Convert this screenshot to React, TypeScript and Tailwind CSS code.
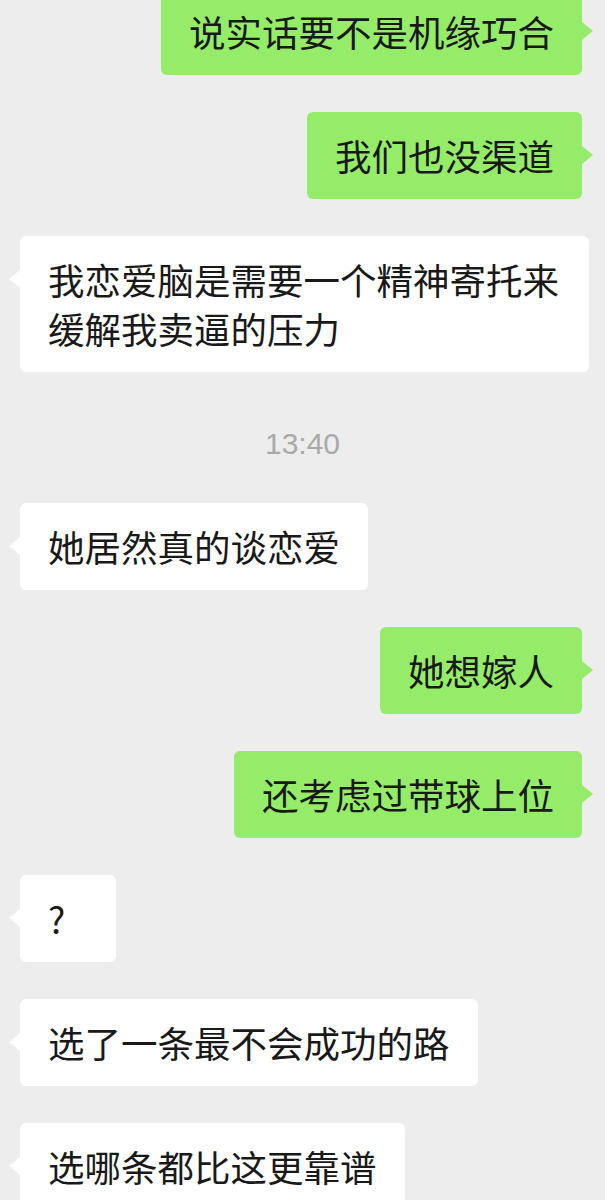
type Msg =
  | { kind: 'me'; text: string }
  | { kind: 'them'; text: React.ReactNode; className?: string }
  | { kind: 'time'; text: string };

const messages: Msg[] = [
  { kind: 'me', text: '说实话要不是机缘巧合' },
  { kind: 'me', text: '我们也没渠道' },
  {
    kind: 'them',
    text: (
      <>
        我恋爱脑是需要一个精神寄托来
        <br />
        缓解我卖逼的压力
      </>
    ),
    className: 'w-[569px]',
  },
  { kind: 'time', text: '13:40' },
  { kind: 'them', text: '她居然真的谈恋爱' },
  { kind: 'me', text: '她想嫁人' },
  { kind: 'me', text: '还考虑过带球上位' },
  { kind: 'them', text: '?', className: 'min-w-[96px]' },
  { kind: 'them', text: '选了一条最不会成功的路' },
  { kind: 'them', text: '选哪条都比这更靠谱' },
];

function Bubble({ mine, children, className = '' }: { mine: boolean; children: React.ReactNode; className?: string }) {
  return (
    <div
      className={`relative rounded-[6px] px-[28px] py-[19px] text-[36.5px] leading-[49px] text-[#191919] ${
        mine ? 'self-end mr-[23px] bg-[#95ec69]' : 'self-start ml-[20px] bg-white'
      } ${className}`}
    >
      {/* tail */}
      {mine ? (
        <span className="absolute top-[34px] left-full border-y-[9px] border-y-transparent border-l-[11px] border-l-[#95ec69]" />
      ) : (
        <span className="absolute top-[34px] right-full border-y-[9px] border-y-transparent border-r-[11px] border-r-white" />
      )}
      {children}
    </div>
  );
}

export default function App() {
  return (
    <div className="h-[1200px] w-full overflow-hidden bg-[#ededed] font-['Noto_Sans_CJK_SC',sans-serif]">
      <div className="-mt-[12px] flex flex-col gap-[37px]">
        {messages.map((m, i) =>
          m.kind === 'time' ? (
            <div
              key={i}
              className="mt-[20px] mb-[7px] text-center font-['Liberation_Sans',sans-serif] text-[30px] leading-[30px] text-[#a9a9a9]"
            >
              {m.text}
            </div>
          ) : (
            <Bubble key={i} mine={m.kind === 'me'} className={m.kind === 'them' ? m.className : ''}>
              {m.text}
            </Bubble>
          )
        )}
      </div>
    </div>
  );
}
